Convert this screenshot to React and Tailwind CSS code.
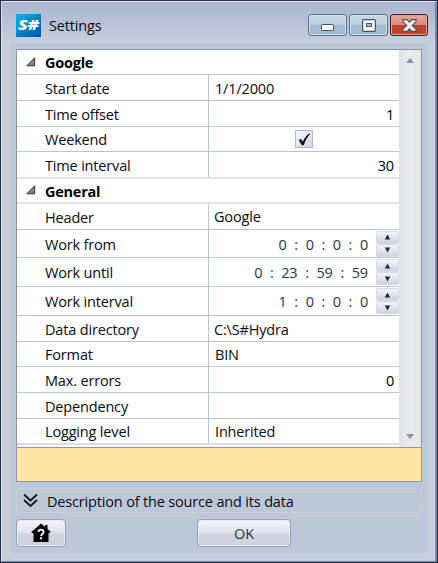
import React from "react";

const line = "border-[#bcc3d6]";

function Category({ name, height, border }) {
  return (
    <div className={`flex items-center border-b ${height} ${border}`}>
      <svg className="ml-[9px] -mt-px h-[10px] w-[10px]" viewBox="0 0 10 10">
        <path d="M0.8 8.8H8.7V0.8Z" fill="#858585" stroke="#303030" />
      </svg>
      <span className="ml-[9px] pt-[2px] font-bold tracking-[-0.25px] text-black">{name}</span>
    </div>
  );
}

function Row({ label, height, border = line, children }) {
  return (
    <div className={`flex border-b ${height} ${border}`}>
      <div className="flex w-[192px] shrink-0 items-center border-r border-[#bcc3d6] pt-[2px] pl-[28px]">{label}</div>
      <div className="flex min-w-0 flex-1 items-center">{children}</div>
    </div>
  );
}

function Spin() {
  const button =
    "flex h-[13px] w-[23px] items-center justify-center rounded-[2px] border border-[#d5d9e2] bg-linear-to-b from-[#f3f5f8] to-[#ced4df]";
  return (
    <div className="ml-[8px] flex flex-col">
      <div className={button}>
        <svg width="7" height="6" viewBox="0 0 7 6"><path d="M3.5 0.5L6.3 5.5H0.7Z" fill="#1e2b46" /></svg>
      </div>
      <div className={button}>
        <svg width="7" height="6" viewBox="0 0 7 6"><path d="M3.5 5.5L6.3 0.5H0.7Z" fill="#1e2b46" /></svg>
      </div>
    </div>
  );
}

function Time({ parts }) {
  return (
    <>
      <div className="flex flex-1 justify-end pt-[2px] text-[#2b344b]">
        {parts.map((p, i) => (
          <React.Fragment key={i}>
            {i > 0 && <span className="w-[19px] text-center">:</span>}
            <span>{p}</span>
          </React.Fragment>
        ))}
      </div>
      <Spin />
    </>
  );
}

const Num = ({ children }) => <span className="flex-1 pt-[2px] pr-[5px] text-right text-black">{children}</span>;

export default function App() {
  return (
    <div className="flex h-[563px] w-[438px] flex-col border border-[#272d45] bg-[#c7cfdd] font-['Open_Sans','Noto_Sans',sans-serif] text-[14.5px] leading-[20px] tracking-[-0.17px] text-[#0b0b14]">
      <div className="flex h-full flex-col border-t border-r-2 border-b border-l border-t-[#e5e9f4] border-r-[#7088ae] border-b-[#7088ae] border-l-[#dde2ee]">
        <header className="flex h-[41px] shrink-0 items-start bg-linear-to-b from-[#a9b4d0] to-[#c7cfdd] pt-3 pl-[14px]">
          <svg width="25" height="23" viewBox="0 0 25 23">
            <defs>
              <linearGradient id="logo" x1="0" y1="0" x2="1" y2="1">
                <stop stopColor="#00b5ec" />
                <stop offset="1" stopColor="#00509f" />
              </linearGradient>
            </defs>
            <rect width="25" height="23" fill="url(#logo)" />
            <text x="2" y="16" textLength="21" lengthAdjust="spacingAndGlyphs" fontFamily="Open Sans" fontStyle="italic" fontWeight="800" fontSize="14" fill="#fff">S#</text>
          </svg>
          <span className="mt-[2px] ml-2">Settings</span>
          <div className="ml-auto flex gap-[2px] pr-[7px]">
            <WindowButton kind="min" />
            <WindowButton kind="max" />
            <WindowButton kind="close" />
          </div>
        </header>

        <main className="mr-[7px] ml-2 flex h-[510px] flex-col bg-[#bcc7d8] pt-[6px] pr-[6px] pl-[6px]">
          <section className="h-[433px] shrink-0 border border-[#8c95ab]">
            <div className="flex h-[397px] bg-white">
              <div className="w-[382px] shrink-0">
                <Category name="Google" height="h-[25px]" border="border-[#bcc3d6]" />
                <Row label="Start date" height="h-[26px]"><span className="pt-[2px] pl-[6px]">1/1/2000</span></Row>
                <Row label="Time offset" height="h-[26px]"><Num>1</Num></Row>
                <Row label="Weekend" height="h-[25px]">
                  <div className="mx-auto flex h-[18px] w-[18px] items-center justify-center border border-[#b0b8cb] bg-linear-to-br from-[#f4f6fa] to-[#cdd4e1]">
                    <svg width="13" height="13" viewBox="0 0 13 13"><path d="M0.8 7L3 6L4.8 8.7C6.5 5 8.5 2.4 11.5 0.4L12 1.2C9 4 7.5 7.5 5.8 12L3.8 12.3Z" fill="#080808" /></svg>
                  </div>
                </Row>
                <Row label="Time interval" height="h-[27px]" border="border-b-2 border-[#e1e4eb]"><Num>30</Num></Row>
                <Category name="General" height="h-[25px]" border="border-b-2 border-[#e1e4eb]" />
                <Row label="Header" height="h-[26px]"><span className="pt-[1px] pl-[5px]">Google</span></Row>
                <Row label="Work from" height="h-[28px]"><Time parts={["0", "0", "0", "0"]} /></Row>
                <Row label="Work until" height="h-[29px]"><Time parts={["0", "23", "59", "59"]} /></Row>
                <Row label="Work interval" height="h-[29px]"><Time parts={["1", "0", "0", "0"]} /></Row>
                <Row label="Data directory" height="h-[26px]"><span className="pt-[2px] pl-[5px]">C:\S#Hydra</span></Row>
                <Row label="Format" height="h-[25px]"><span className="pt-[2px] pl-[6px]">BIN</span></Row>
                <Row label="Max. errors" height="h-[26px]"><Num>0</Num></Row>
                <Row label="Dependency" height="h-[26px]" />
                <Row label="Logging level" height="h-[26px]" border="border-b-2 border-[#d9dde9]"><span className="pt-[2px] pl-[6px]">Inherited</span></Row>
              </div>
              <div className="flex flex-1 flex-col items-center justify-between bg-linear-to-r from-[#e0e2e6] via-[#e9ebed] to-[#e4e6e9] pt-2 pb-2">
                <svg width="8" height="5" viewBox="0 0 8 5"><path d="M4 0L8 5H0Z" fill="#8793ae" /></svg>
                <svg width="8" height="5" viewBox="0 0 8 5"><path d="M0 0H8L4 5Z" fill="#8793ae" /></svg>
              </div>
            </div>
            <div className="h-[34px] border-t border-[#8c95ab] bg-[#ffe6a2]" />
          </section>

          <section className="mt-[6px] flex h-[25px] shrink-0 items-center rounded-[4px] border border-[#cdced5] pl-[6px]">
            <svg width="15" height="15" viewBox="0 0 15 15" fill="none" stroke="#111722" strokeWidth="1.8">
              <path d="M1 1.5L7.5 7.5L14 1.5M1 7L7.5 13L14 7" />
            </svg>
            <span className="ml-[9px] pt-[2px]">Description of the source and its data</span>
          </section>

          <footer className="mt-[6px] flex">
            <button className="flex h-[28px] w-[50px] items-center justify-center rounded-[4px] border border-[#98a4bf] bg-linear-to-b from-[#f2f4f8] from-0% via-[#e2e5ed] via-45% to-[#ced3df] to-55% shadow-[inset_0_0_0_1px_#e6eaf2]">
              <svg width="20" height="20" viewBox="0 0 20 20">
                <path d="M10 0.5L14 3.8V2H16.5V6L19.7 8.8L18.5 10H17.5V19H2.5V10H0.5V9Z" fill="#000" />
                <path d="M7.5 9C7.6 5.8 12.7 6 12.6 9C12.5 11 10.2 10.9 10.1 13" fill="none" stroke="#fff" strokeWidth="1.8" />
                <rect x="9.1" y="14.3" width="2" height="2" fill="#fff" />
              </svg>
            </button>
            <button className="ml-[131px] h-[28px] w-[94px] rounded-[4px] border border-[#98a4bf] bg-linear-to-b from-[#f2f4f8] from-0% via-[#e2e5ed] via-45% to-[#ced3df] to-55% pt-px text-[#2b344b] shadow-[inset_0_0_0_1px_#e6eaf2]">OK</button>
          </footer>
        </main>
      </div>
    </div>
  );
}

function WindowButton({ kind }) {
  const close = kind === "close";
  return (
    <div
      className={`flex h-[22px] items-center justify-center rounded-[3px] border ${
        close
          ? "w-[38px] border-[#541725] bg-linear-to-b from-[#e5a59c] from-0% via-[#d98c80] via-50% to-[#bd432f] to-50% shadow-[inset_0_0_0_1px_#e3a094]"
          : "w-[39px] border-[#5b6f91] bg-linear-to-b from-[#c8d6e5] from-0% via-[#bccddd] via-50% to-[#a2bacf] to-50% shadow-[inset_0_0_0_1px_#d3e2ee]"
      }`}
    >
      {kind === "min" && (
        <svg width="13" height="14" viewBox="0 0 13 14"><rect x="0.5" y="6.5" width="12" height="6" rx="1" fill="#f7f7f7" stroke="#4b5265" /></svg>
      )}
      {kind === "max" && (
        <svg width="14" height="13" viewBox="0 0 14 13">
          <rect x="0.6" y="0.6" width="12.8" height="11.8" rx="1" fill="#f7f7f7" stroke="#4b5265" strokeWidth="1.2" />
          <rect x="4.5" y="4.5" width="5" height="3" fill="#a8bdd4" stroke="#4b5265" />
        </svg>
      )}
      {close && (
        <svg width="15" height="13" viewBox="0 0 15 13">
          <path d="M1 0.6H5L7.5 3.2L10 0.6H14V2.8L10.2 6.5L14 10.2V12.4H10L7.5 9.8L5 12.4H1V10.2L4.8 6.5L1 2.8Z" fill="#f5f3f3" stroke="#4b4c60" strokeWidth="1.1" />
        </svg>
      )}
    </div>
  );
}
